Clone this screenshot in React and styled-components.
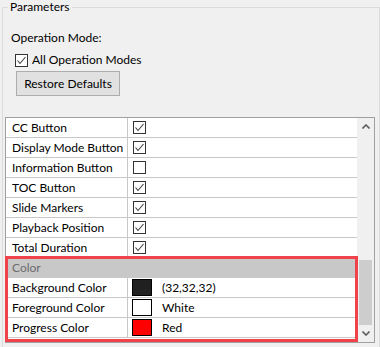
import React from "react";
import styled, { createGlobalStyle } from "styled-components";

const Global = createGlobalStyle`
  html, body { margin: 0; padding: 0; background: #f0f0f0; overflow: hidden; }
  body { font-family: Lato, "Noto Sans", sans-serif; font-size: 12px; color: #000; }
`;

const Page = styled.div`
  width: 380px;
  height: 347px;
  overflow: hidden;
  padding-top: 7px;
  box-sizing: border-box;
`;

const Group = styled.div`
  position: relative;
  margin-left: 2px;
  width: 378px;
  height: 360px;
  box-sizing: border-box;
  border: 1px solid #dcdcdc;
  padding: 0 4px 0 2px;
  display: flex;
  flex-direction: column;
`;

const Legend = styled.span`
  position: absolute;
  top: -9px;
  left: 5px;
  padding: 0 2px;
  background: #f0f0f0;
  line-height: 16px;
`;

const Label = styled.div`
  margin: 22px 0 0 6px;
  line-height: 16px;
`;

const CheckRow = styled.label`
  display: flex;
  align-items: center;
  gap: 4px;
  margin: 6px 0 0 10px;
  height: 16px;
  line-height: 16px;
`;

const Box = styled.span`
  width: 13px;
  height: 13px;
  box-sizing: border-box;
  border: 1px solid #333;
  background: #fff;
  display: inline-flex;
  align-items: center;
  justify-content: center;
  flex: none;
`;

const Button = styled.button`
  margin: 3px 0 0 11px;
  width: 104px;
  height: 25px;
  box-sizing: border-box;
  border: 1px solid #adadad;
  background: #e1e1e1;
  font: inherit;
  color: #000;
  padding: 0;
  align-self: flex-start;
`;

const Grid = styled.div`
  position: relative;
  margin-top: 21px;
  height: 226px;
  box-sizing: border-box;
  border: 1px solid #a0a0a0;
  background: #fff;
  display: flex;
`;

const Rows = styled.div`
  flex: 1;
  display: flex;
  flex-direction: column;
`;

const Row = styled.div`
  display: grid;
  grid-template-columns: 122px 1fr;
  height: 20px;
  box-sizing: border-box;
  border-bottom: 1px solid #c8c8c8;
  background: ${(p) => (p.$header ? "#c8c8c8" : "#fff")};
`;

const Name = styled.div`
  padding-left: 6px;
  line-height: 19px;
  white-space: nowrap;
  overflow: hidden;
  border-right: ${(p) => (p.$header ? "none" : "1px solid #c8c8c8")};
  color: ${(p) => (p.$header ? "#6d6d6d" : "#000")};
`;

const Value = styled.div`
  display: flex;
  align-items: center;
  padding-left: 5px;
  gap: 10px;
  line-height: 19px;
`;

const Swatch = styled.span`
  width: 20px;
  height: 17px;
  box-sizing: border-box;
  border: 1px solid #000;
  margin-left: -1px;
  background: ${(p) => p.$color};
  flex: none;
`;

const Scrollbar = styled.div`
  width: 17px;
  background: #f0f0f0;
  display: flex;
  flex-direction: column;
  align-items: center;
`;

const Arrow = styled.div`
  height: 17px;
  width: 17px;
  display: flex;
  align-items: center;
  justify-content: center;
  flex: none;
`;

const Track = styled.div`
  flex: 1;
  width: 100%;
  display: flex;
  flex-direction: column;
  align-items: center;
`;

const Thumb = styled.div`
  margin-top: 125px;
  width: 13px;
  height: 65px;
  background: #cdcdcd;
`;

const Highlight = styled.div`
  position: absolute;
  left: -1px;
  top: 138px;
  width: 353px;
  height: 86px;
  box-sizing: border-box;
  border: 3px solid #f0424a;
  pointer-events: none;
`;

const Check = () => (
  <svg width="11" height="11" viewBox="0 0 11 11">
    <path d="M1.5 5.5 L4 8.5 L9.5 2" fill="none" stroke="#404040" strokeWidth="1.1" />
  </svg>
);

const Chevron = ({ up }) => (
  <svg width="8" height="5" viewBox="0 0 8 5">
    <path
      d={up ? "M0.5 4.5 L4 1 L7.5 4.5" : "M0.5 0.5 L4 4 L7.5 0.5"}
      fill="none"
      stroke="#606060"
      strokeWidth="1.6"
    />
  </svg>
);

const boolRows = [
  ["CC Button", true],
  ["Display Mode Button", true],
  ["Information Button", false],
  ["TOC Button", true],
  ["Slide Markers", true],
  ["Playback Position", true],
  ["Total Duration", true],
];

const colorRows = [
  ["Background Color", "#202020", "(32,32,32)"],
  ["Foreground Color", "#ffffff", "White"],
  ["Progress Color", "#ff0000", "Red"],
];

export default function App() {
  return (
    <Page>
      <Global />
      <Group>
        <Legend>Parameters</Legend>
        <Label>Operation Mode:</Label>
        <CheckRow>
          <Box>
            <Check />
          </Box>
          All Operation Modes
        </CheckRow>
        <Button>Restore Defaults</Button>
        <Grid>
          <Rows>
            {boolRows.map(([name, on]) => (
              <Row key={name}>
                <Name>{name}</Name>
                <Value>
                  <Box>{on && <Check />}</Box>
                </Value>
              </Row>
            ))}
            <Row $header>
              <Name $header>Color</Name>
              <div />
            </Row>
            {colorRows.map(([name, c, v]) => (
              <Row key={name}>
                <Name>{name}</Name>
                <Value>
                  <Swatch $color={c} />
                  {v}
                </Value>
              </Row>
            ))}
          </Rows>
          <Scrollbar>
            <Arrow>
              <Chevron up />
            </Arrow>
            <Track>
              <Thumb />
            </Track>
            <Arrow>
              <Chevron />
            </Arrow>
          </Scrollbar>
          <Highlight />
        </Grid>
      </Group>
    </Page>
  );
}
